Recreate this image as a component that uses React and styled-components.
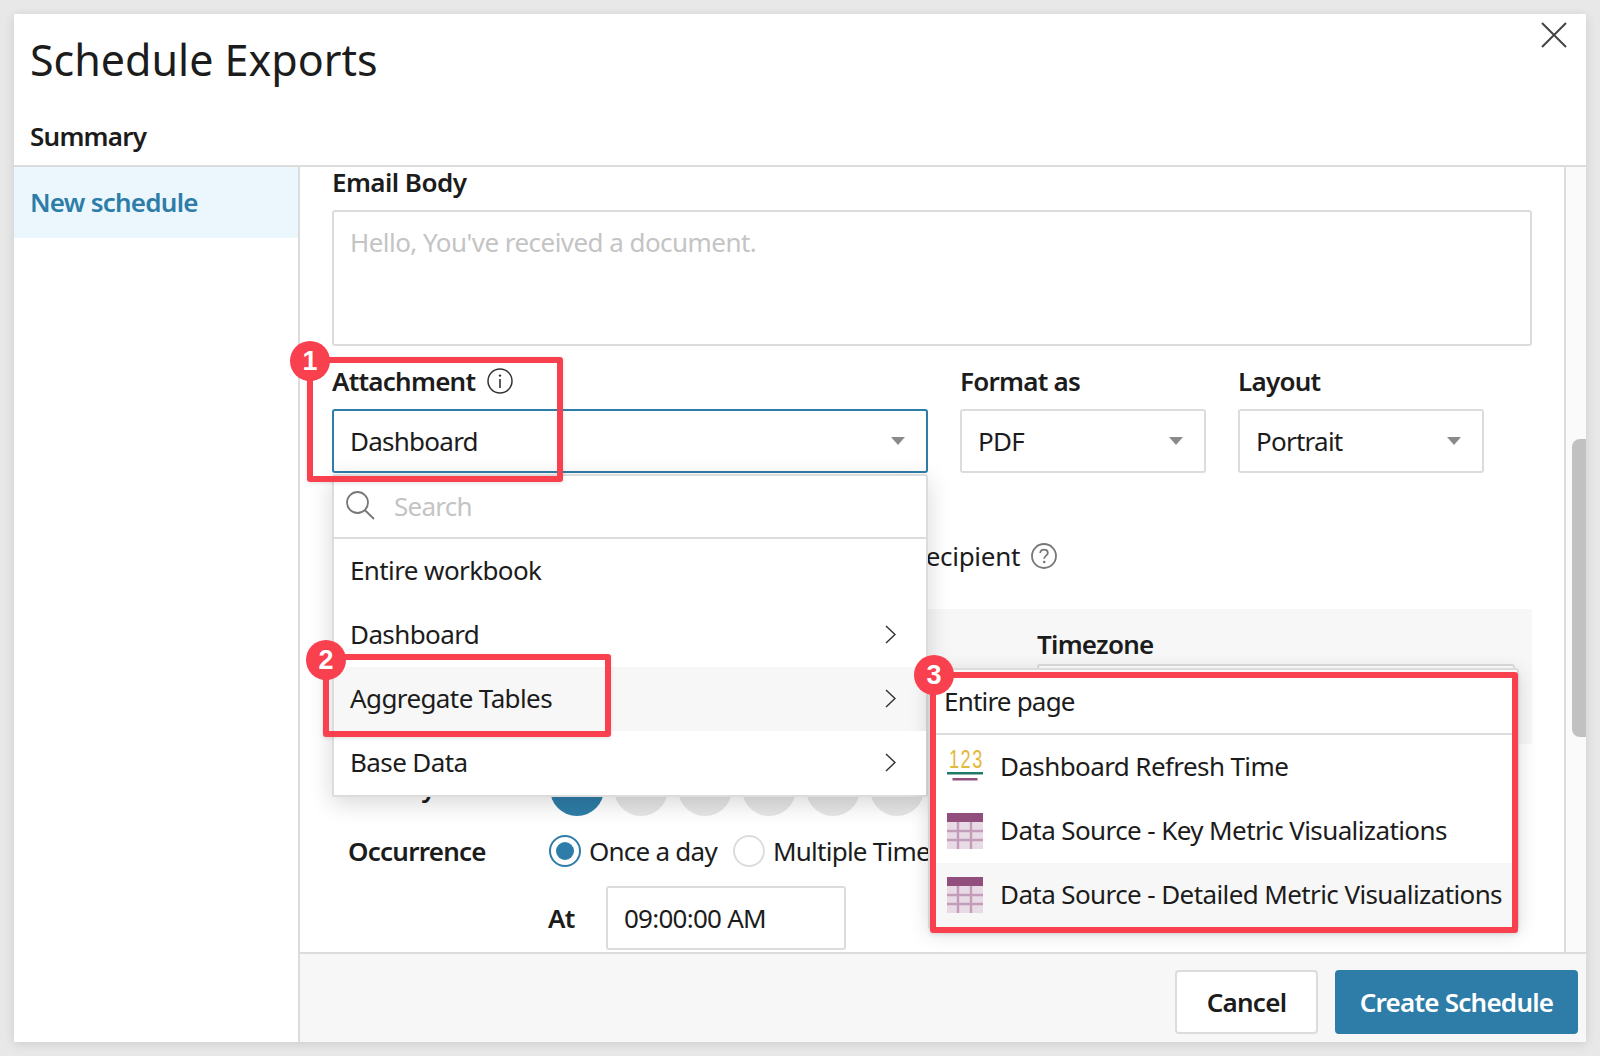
import styled, { createGlobalStyle } from "styled-components";

const BLUE = "#2e7da8";
const RED = "#f8404f";
const BORDER = "#dcdcdc";
const INK = "#1c1c1c";
const SOFT = "#f7f7f7";

const GlobalStyle = createGlobalStyle`
    html, body {
        margin: 0;
        height: 100%;
    }
    body {
        background: #e8e8e8;
        color: ${INK};
        font-family: "Noto Sans", "Open Sans", sans-serif;
        font-size: 26px;
        letter-spacing: -0.75px;
    }
    * {
        box-sizing: border-box;
    }
`;

const CloseIcon = () => (
    <CloseSvg viewBox="0 0 26 26">
        <path d="M1 1 L25 25 M25 1 L1 25" stroke="#444" strokeWidth="2" fill="none" />
    </CloseSvg>
);

const InfoIcon = () => (
    <HintSvg viewBox="0 0 26 26">
        <circle cx="13" cy="13" r="12" fill="none" stroke="#333" strokeWidth="1.5" />
        <circle cx="13" cy="7.6" r="1.2" fill="#333" />
        <path d="M13 11 V20" stroke="#333" strokeWidth="1.6" />
    </HintSvg>
);

const HelpIcon = () => (
    <HintSvg viewBox="0 0 26 26">
        <circle cx="13" cy="13" r="12" fill="none" stroke="#777" strokeWidth="1.8" />
        <path
            d="M9.2 10 C9.4 7.6 11 6.6 13 6.6 C15.2 6.6 16.8 8 16.8 10 C16.8 12.6 13.2 12.8 13.2 15.8"
            fill="none"
            stroke="#777"
            strokeWidth="1.8"
        />
        <circle cx="13.2" cy="19" r="1.3" fill="#777" />
    </HintSvg>
);

const Caret = () => (
    <CaretSvg viewBox="0 0 14 8">
        <path d="M0 0 H14 L7 8 Z" fill="#8a8a8a" />
    </CaretSvg>
);

const Chevron = () => (
    <ChevronSvg viewBox="0 0 11 19">
        <path d="M1 1 L10 9.5 L1 18" fill="none" stroke="#333" strokeWidth="1.5" />
    </ChevronSvg>
);

const SearchIcon = () => (
    <SearchSvg viewBox="0 0 29 29">
        <circle cx="11.5" cy="11.5" r="10.5" fill="none" stroke="#777" strokeWidth="1.8" />
        <path d="M18.8 19 L28 28" stroke="#777" strokeWidth="1.8" />
    </SearchSvg>
);

const NumberIcon = () => (
    <ItemSvg viewBox="0 0 36 36">
        <NumberGlyphs x="3" y="19" transform="scale(0.7 1)">
            123
        </NumberGlyphs>
        <rect x="0" y="23" width="36" height="2.5" fill="#1f7a68" />
        <rect x="5.5" y="29" width="25" height="2.5" fill="#924f7e" />
    </ItemSvg>
);

const TableIcon = () => (
    <ItemSvg viewBox="0 0 36 36">
        <rect width="36" height="36" fill="#e8dbe5" />
        <rect width="36" height="9" fill="#924f7e" />
        <path d="M0 18 H36 M0 27 H36 M11 9 V36 M24 9 V36" stroke="#c29cb9" strokeWidth="2.4" />
    </ItemSvg>
);

const days = [0, 1, 2, 3, 4, 5, 6];

const flyoutItems = [
    { name: "Dashboard Refresh Time", icon: <NumberIcon /> },
    { name: "Data Source - Key Metric Visualizations", icon: <TableIcon /> },
    { name: "Data Source - Detailed Metric Visualizations", icon: <TableIcon />, active: true },
];

const marks = [
    { n: 1, x: 307, y: 357, w: 256, h: 125, bx: 290, by: 341 },
    { n: 2, x: 323, y: 654, w: 288, h: 83, bx: 306, by: 640 },
    { n: 3, x: 930, y: 672, w: 588, h: 261, bx: 914, by: 655 },
];

function App() {
    return (
        <Page>
            <GlobalStyle />
            <Modal>
                <Header>
                    <Title>Schedule Exports</Title>
                    <SummaryLabel>Summary</SummaryLabel>
                    <CloseIcon />
                </Header>
                <Body>
                    <Sidebar>
                        <SidebarItem>New schedule</SidebarItem>
                    </Sidebar>
                    <Main>
                        <ScrollArea>
                            <Content>
                                <EmailLabel>Email Body</EmailLabel>
                                <TextArea>Hello, You've received a document.</TextArea>
                                <FieldRow>
                                    <AttachmentField>
                                        <Label>
                                            Attachment <InfoIcon />
                                        </Label>
                                        <Select $focused>
                                            Dashboard
                                            <Caret />
                                        </Select>
                                        <Menu>
                                            <SearchRow>
                                                <SearchIcon />
                                                Search
                                            </SearchRow>
                                            <MenuRow>Entire workbook</MenuRow>
                                            <MenuRow>
                                                Dashboard
                                                <Chevron />
                                            </MenuRow>
                                            <MenuRow $active>
                                                Aggregate Tables
                                                <Chevron />
                                                <Flyout>
                                                    <FlyoutHead>Entire page</FlyoutHead>
                                                    {flyoutItems.map((item) => (
                                                        <FlyoutRow key={item.name} $active={item.active}>
                                                            {item.icon}
                                                            <FlyoutText>{item.name}</FlyoutText>
                                                        </FlyoutRow>
                                                    ))}
                                                </Flyout>
                                            </MenuRow>
                                            <MenuRow>
                                                Base Data
                                                <Chevron />
                                            </MenuRow>
                                        </Menu>
                                    </AttachmentField>
                                    <SmallField>
                                        <Label>Format as</Label>
                                        <Select>
                                            PDF
                                            <Caret />
                                        </Select>
                                    </SmallField>
                                    <SmallField>
                                        <Label>Layout</Label>
                                        <Select>
                                            Portrait
                                            <Caret />
                                        </Select>
                                    </SmallField>
                                </FieldRow>
                                <RecipientRow>
                                    Run queries as recipient
                                    <HelpIcon />
                                </RecipientRow>
                                <SchedulePanel>
                                    <TimezoneField>
                                        <TightLabel>Timezone</TightLabel>
                                        <Select />
                                    </TimezoneField>
                                </SchedulePanel>
                                <DaysRow>
                                    <DaysLabel>Weekly</DaysLabel>
                                    {days.map((day) => (
                                        <DayButton key={day} $on={day === 0} />
                                    ))}
                                </DaysRow>
                                <OccurrenceRow>
                                    <RowLabel>Occurrence</RowLabel>
                                    <Radio $on />
                                    <RadioText>Once a day</RadioText>
                                    <Radio />
                                    <RadioText>Multiple Times</RadioText>
                                </OccurrenceRow>
                                <AtRow>
                                    <AtLabel>At</AtLabel>
                                    <TimeInput>09:00:00 AM</TimeInput>
                                </AtRow>
                            </Content>
                            <ScrollTrack>
                                <ScrollThumb />
                            </ScrollTrack>
                        </ScrollArea>
                        <Footer>
                            <CancelButton>Cancel</CancelButton>
                            <PrimaryButton>Create Schedule</PrimaryButton>
                        </Footer>
                    </Main>
                </Body>
            </Modal>
            {marks.map((m) => (
                <div key={m.n}>
                    <MarkBox $x={m.x} $y={m.y} $w={m.w} $h={m.h} />
                    <MarkBadge $x={m.bx} $y={m.by}>
                        {m.n}
                    </MarkBadge>
                </div>
            ))}
        </Page>
    );
}

export default App;

const Page = styled.div`
    position: relative;
    width: 1600px;
    height: 1056px;
    padding: 14px;
    overflow: hidden;
`;

const Modal = styled.div`
    width: 1572px;
    height: 1028px;
    background: #fff;
    box-shadow: 0 2px 10px rgba(0, 0, 0, 0.12);
    display: flex;
    flex-direction: column;
`;

const Header = styled.header`
    position: relative;
    height: 153px;
    flex-shrink: 0;
    padding: 0 16px;
    border-bottom: 2px solid ${BORDER};
`;

const Title = styled.h1`
    margin: 0;
    padding-top: 17px;
    font-size: 43px;
    line-height: 58px;
    font-weight: 400;
    letter-spacing: 0;
`;

const SummaryLabel = styled.div`
    margin-top: 29px;
    line-height: 36px;
    font-weight: 600;
`;

const CloseSvg = styled.svg`
    position: absolute;
    top: 8px;
    right: 19px;
    width: 26px;
    height: 26px;
`;

const NumberGlyphs = styled.text`
    font-family: "Liberation Sans", sans-serif;
    font-size: 26px;
    letter-spacing: 2px;
    fill: #e3b93c;
`;

const Body = styled.div`
    flex: 1;
    min-height: 0;
    display: flex;
`;

const Sidebar = styled.aside`
    width: 286px;
    flex-shrink: 0;
    border-right: 2px solid ${BORDER};
`;

const SidebarItem = styled.div`
    height: 71px;
    padding: 0 0 1px 16px;
    display: flex;
    align-items: center;
    background: #ebf7fd;
    color: ${BLUE};
    font-weight: 600;
`;

const Main = styled.main`
    flex: 1;
    min-width: 0;
    display: flex;
    flex-direction: column;
`;

const ScrollArea = styled.div`
    flex: 1;
    min-height: 0;
    display: flex;
    overflow: hidden;
`;

const Content = styled.div`
    flex: 1;
    min-width: 0;
    padding: 0 32px;
`;

const ScrollTrack = styled.div`
    width: 22px;
    flex-shrink: 0;
    padding: 272px 0 215px 6px;
    border-left: 2px solid ${BORDER};
    background: #fafafa;
`;

const ScrollThumb = styled.div`
    height: 100%;
    background: #c1c1c1;
    border-radius: 8px 0 0 8px;
`;

const Label = styled.div`
    display: flex;
    align-items: center;
    gap: 12px;
    height: 32px;
    margin-bottom: 12px;
    line-height: 30px;
    font-weight: 600;
`;

const EmailLabel = styled(Label)`
    height: 30px;
    margin-bottom: 13px;
    letter-spacing: -0.55px;
`;

const TightLabel = styled(Label)`
    margin-bottom: 4px;
`;

const TextArea = styled.div`
    height: 136px;
    padding: 12px 16px;
    border: 2px solid ${BORDER};
    border-radius: 3px;
    color: #c4c4c4;
    line-height: 36px;
    letter-spacing: -0.55px;
`;

const FieldRow = styled.div`
    display: flex;
    gap: 32px;
    margin-top: 19px;
`;

const AttachmentField = styled.div`
    position: relative;
    width: 596px;
`;

const SmallField = styled.div`
    width: 246px;
`;

const Select = styled.div`
    height: 64px;
    padding: 0 21px 0 16px;
    display: flex;
    align-items: center;
    justify-content: space-between;
    background: #fff;
    border: 2px solid ${(props) => (props.$focused ? BLUE : BORDER)};
    border-radius: 3px;
`;

const CaretSvg = styled.svg`
    width: 14px;
    height: 8px;
    flex-shrink: 0;
`;

const HintSvg = styled.svg`
    width: 26px;
    height: 26px;
    flex-shrink: 0;
`;

const Menu = styled.div`
    position: absolute;
    top: 109px;
    left: 0;
    width: 596px;
    z-index: 5;
    background: #fff;
    border: 2px solid ${BORDER};
    border-radius: 3px;
    box-shadow: 0 6px 24px rgba(0, 0, 0, 0.16);
`;

const SearchRow = styled.div`
    height: 63px;
    padding: 0 0 2px 12px;
    display: flex;
    align-items: center;
    gap: 19px;
    color: #c4c4c4;
    border-bottom: 2px solid ${BORDER};
`;

const SearchSvg = styled.svg`
    width: 29px;
    height: 29px;
`;

const MenuRow = styled.div`
    position: relative;
    height: 64px;
    padding: 0 30px 2px 16px;
    display: flex;
    align-items: center;
    justify-content: space-between;
    letter-spacing: -0.6px;
    background: ${(props) => (props.$active ? SOFT : "#fff")};
`;

const ChevronSvg = styled.svg`
    width: 11px;
    height: 19px;
    flex-shrink: 0;
`;

const Flyout = styled.div`
    position: absolute;
    top: 1px;
    left: calc(100% + 2px);
    width: 591px;
    background: #fff;
    border: 2px solid ${BORDER};
    border-radius: 3px;
    box-shadow: 0 4px 20px rgba(0, 0, 0, 0.14);
`;

const FlyoutHead = styled.div`
    height: 65px;
    padding: 0 0 2px 14px;
    display: flex;
    align-items: center;
    letter-spacing: -0.8px;
    border-bottom: 2px solid ${BORDER};
`;

const FlyoutRow = styled.div`
    height: 64px;
    padding-left: 17px;
    display: flex;
    align-items: center;
    gap: 17px;
    white-space: nowrap;
    background: ${(props) => (props.$active ? SOFT : "#fff")};
`;

const FlyoutText = styled.span`
    margin-bottom: 2px;
`;

const ItemSvg = styled.svg`
    width: 36px;
    height: 36px;
    flex-shrink: 0;
`;

const RecipientRow = styled.div`
    width: 725px;
    height: 32px;
    margin-top: 67px;
    display: flex;
    align-items: center;
    justify-content: flex-end;
    gap: 11px;
    white-space: nowrap;
    letter-spacing: -0.3px;
`;

const SchedulePanel = styled.div`
    margin-top: 37px;
    height: 135px;
    padding: 19px 17px 0;
    display: flex;
    justify-content: flex-end;
    background: ${SOFT};
`;

const TimezoneField = styled.div`
    width: 478px;
`;

const DaysRow = styled.div`
    display: flex;
    align-items: center;
    gap: 10px;
    margin-top: 18px;
    padding-left: 16px;
`;

const RowLabel = styled.div`
    width: 201px;
    font-weight: 600;
    flex-shrink: 0;
`;

const DaysLabel = styled(RowLabel)`
    width: 192px;
    margin-bottom: 4px;
`;

const DayButton = styled.div`
    width: 54px;
    height: 54px;
    flex-shrink: 0;
    border-radius: 50%;
    background: ${(props) => (props.$on ? BLUE : "#e6e6e6")};
`;

const OccurrenceRow = styled.div`
    display: flex;
    align-items: center;
    height: 32px;
    margin-top: 19px;
    padding-left: 16px;
    white-space: nowrap;
`;

const Radio = styled.span`
    position: relative;
    width: 32px;
    height: 32px;
    flex-shrink: 0;
    border-radius: 50%;
    border: 2px solid ${(props) => (props.$on ? BLUE : BORDER)};
    background: #fff;
    &::after {
        content: "";
        display: ${(props) => (props.$on ? "block" : "none")};
        position: absolute;
        inset: 5px;
        border-radius: 50%;
        background: ${BLUE};
    }
`;

const RadioText = styled.span`
    margin: 0 16px 0 8px;
`;

const AtRow = styled.div`
    display: flex;
    align-items: center;
    margin-top: 19px;
    padding-left: 216px;
`;

const AtLabel = styled.div`
    width: 58px;
    font-weight: 600;
`;

const TimeInput = styled.div`
    width: 240px;
    height: 64px;
    padding-left: 16px;
    display: flex;
    align-items: center;
    border: 2px solid ${BORDER};
    border-radius: 3px;
`;

const Footer = styled.footer`
    height: 90px;
    flex-shrink: 0;
    padding: 16px 8px 0 0;
    display: flex;
    justify-content: flex-end;
    gap: 17px;
    background: ${SOFT};
    border-top: 2px solid ${BORDER};
`;

const CancelButton = styled.div`
    width: 143px;
    height: 64px;
    display: flex;
    align-items: center;
    justify-content: center;
    background: #fff;
    border: 2px solid ${BORDER};
    border-radius: 4px;
    font-weight: 600;
`;

const PrimaryButton = styled(CancelButton)`
    width: 243px;
    background: ${BLUE};
    border-color: ${BLUE};
    color: #fff;
`;

const MarkBox = styled.div`
    position: absolute;
    z-index: 10;
    left: ${(props) => props.$x}px;
    top: ${(props) => props.$y}px;
    width: ${(props) => props.$w}px;
    height: ${(props) => props.$h}px;
    border: 6px solid ${RED};
    border-radius: 3px;
    box-shadow: 0 1px 4px rgba(0, 0, 0, 0.12);
`;

const MarkBadge = styled.div`
    position: absolute;
    z-index: 11;
    left: ${(props) => props.$x}px;
    top: ${(props) => props.$y}px;
    width: 40px;
    height: 40px;
    display: flex;
    align-items: center;
    justify-content: center;
    border-radius: 50%;
    background: ${RED};
    color: #fff;
    font-family: "Liberation Sans", sans-serif;
    font-size: 27px;
    font-weight: 700;
    letter-spacing: 0;
`;
